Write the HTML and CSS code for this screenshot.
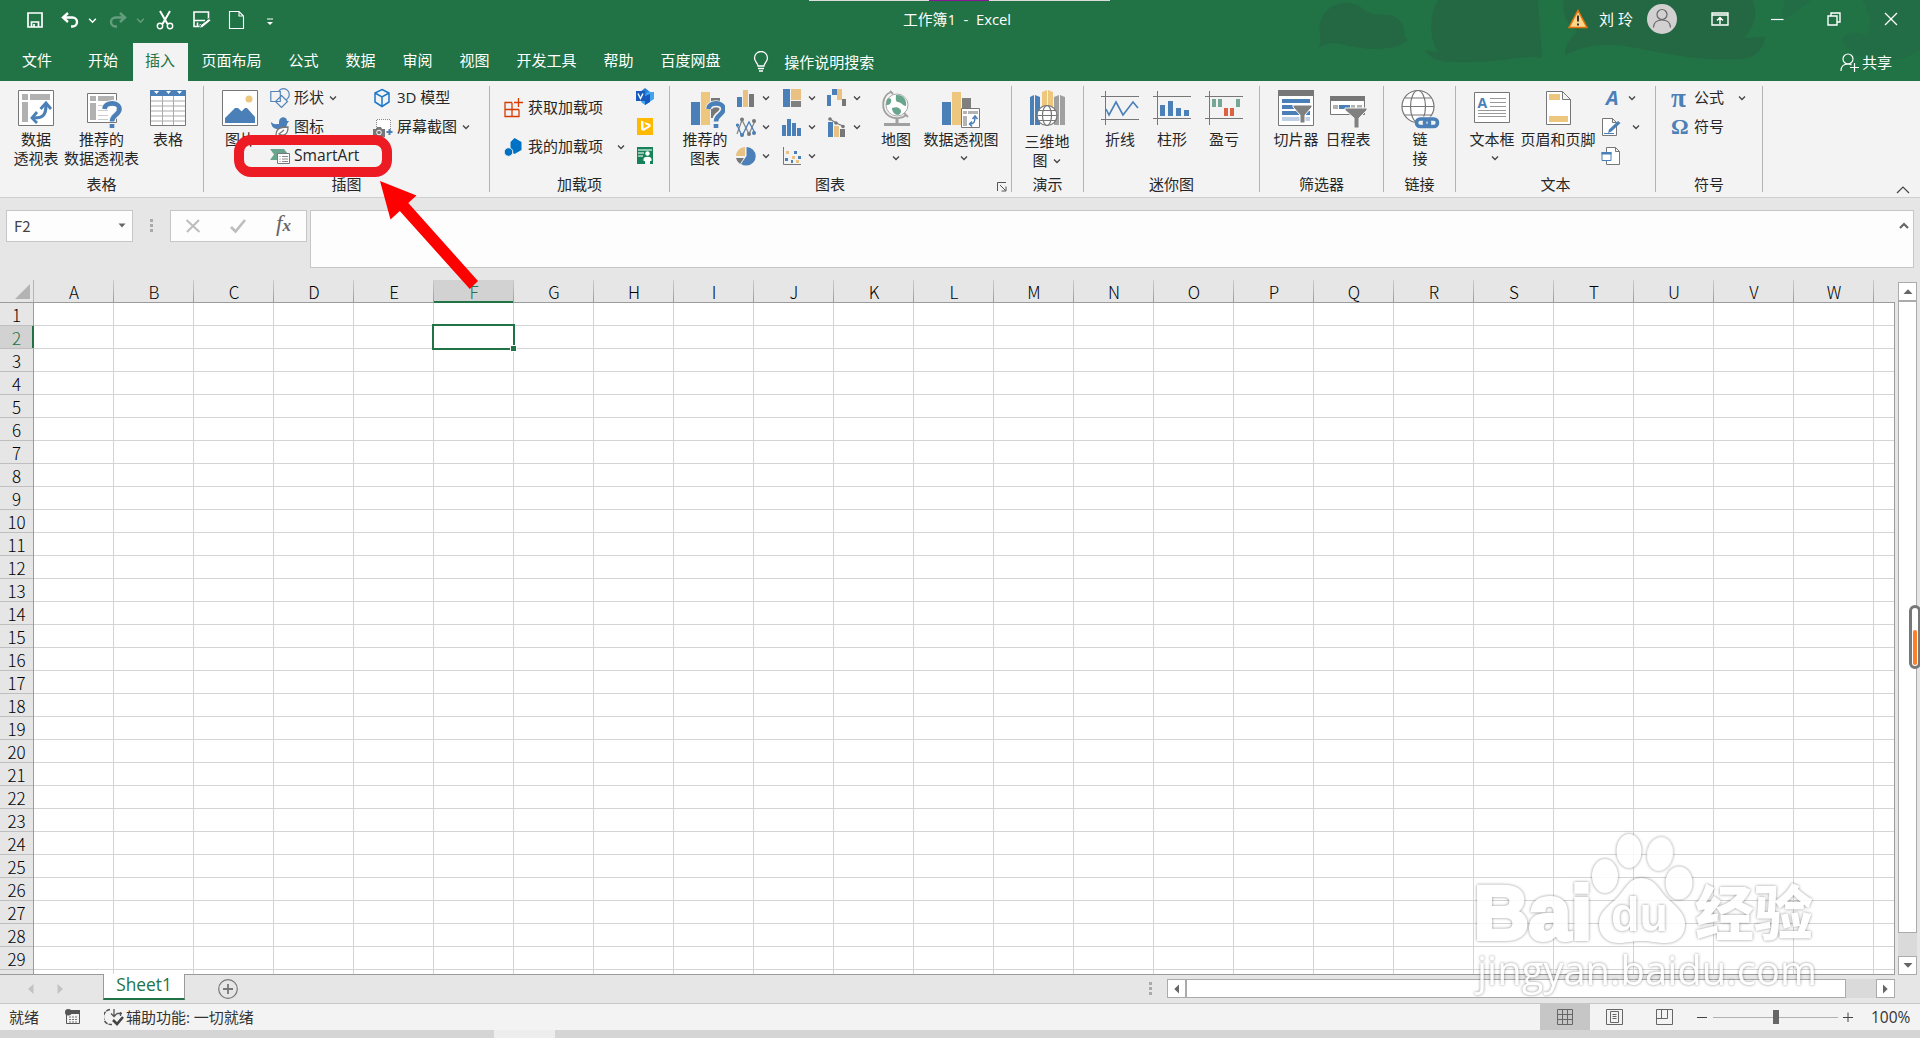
FILE: index.html
```html
<!DOCTYPE html>
<html lang="zh-CN">
<head>
    <meta charset="UTF-8">
    <meta name="viewport" content="width=device-width, initial-scale=1.0">
    <title>工作簿1 - Excel</title>
    <link rel="stylesheet" href="styles.css">
</head>
<body>
    <svg class="defs" width="0" height="0">
        <symbol id="chev" viewBox="0 0 8 8"><path d="M1 2.5l3 3 3-3" fill="none" stroke="currentColor" stroke-width="1.3"/></symbol>
    </svg>

    <header class="header">
        <svg class="header-art" width="640" height="81" viewBox="1280 0 640 81">
            <path d="M1319 48C1322 38 1318 31 1320 22C1326 2 1350-2 1362 8C1370 16 1378 14 1390 15C1402 18 1406 28 1404 36L1408 40C1395 52 1365 50 1345 45C1333 42 1326 43 1319 48z"/>
            <path d="M1432 0H1538L1542 58C1520 54 1500 64 1450 62C1438 62 1428 57 1425 50L1438 52C1428 38 1430 12 1438 0z"/>
            <path d="M1564 0H1752C1760 14 1752 30 1744 38C1754 38 1762 36 1765 37C1764 48 1756 58 1742 59C1700 62 1660 52 1630 47C1608 43 1588 44 1565 55C1564 46 1572 36 1577 32C1564 22 1562 10 1564 0z"/>
            <path opacity=".5" d="M1785 0H1812C1800 8 1788 18 1780 20zM1862 0H1920V50C1906 60 1890 62 1872 60C1856 58 1842 46 1842 38C1848 30 1860 32 1866 36C1874 24 1868 10 1862 0z"/>
        </svg>
        <div class="top-strip"><span></span></div>

        <div class="titlebar">
            <div class="qat">
                <svg class="q-save" width="18" height="18" viewBox="0 0 18 18"><path d="M2 2h14v14H2zM5.500 16v-5h7v5M8 16v-3" fill="none" stroke="#fff" stroke-width="1.700"/></svg>
                <svg class="q-undo" width="20" height="18" viewBox="0 0 20 18"><path d="M8 2L3 6.500 8 11M3 6.500h9.500a4.500 4.500 0 010 9H11" fill="none" stroke="#fff" stroke-width="2.400"/></svg>
                <svg class="q-chev" width="9" height="9"><use href="#chev"/></svg>
                <svg class="q-redo" width="20" height="18" viewBox="0 0 20 18"><path d="M12 2l5 4.500-5 4.500M17 6.500H7.500a4.500 4.500 0 000 9H9" fill="none" stroke="#fff" stroke-width="2.400"/></svg>
                <svg class="q-chev q-dim" width="9" height="9"><use href="#chev"/></svg>
                <svg class="q-cut" width="18" height="20" viewBox="0 0 18 20"><path d="M4 1l7.500 13M14 1L6.500 14" fill="none" stroke="#fff" stroke-width="2"/><circle cx="4" cy="16" r="2.700" fill="none" stroke="#fff" stroke-width="1.400"/><circle cx="14" cy="16" r="2.700" fill="none" stroke="#fff" stroke-width="1.400"/></svg>
                <svg class="q-edit" width="20" height="20" viewBox="0 0 20 20"><path d="M9 16.500H2V2h14.500v7M2 10.500h11M5.500 16v-3.500M8.500 16v-2" fill="none" stroke="#fff" stroke-width="1.600"/><path d="M7.500 18.500l1-3.500L17 8.500l2 2-8.300 6.800z" fill="#fff" stroke="#217346"/></svg>
                <svg class="q-new" width="17" height="20" viewBox="0 0 17 20"><path d="M1.500 1.500h9.500l4.500 4.500v12.500h-14zM11 1.500v4.500h4.500" fill="none" stroke="#fff" stroke-width="1.100"/></svg>
                <svg class="q-more" width="8" height="8" viewBox="0 0 8 8"><path d="M1 1h6" stroke="#fff"/><path d="M1 4h6L4 7z" fill="#fff"/></svg>
            </div>
            <div class="doc-title">工作簿1&nbsp; -&nbsp; Excel</div>
            <div class="window-tools">
                <svg width="20" height="20" viewBox="0 0 20 20"><path d="M10 1.500L19 18.500H1z" fill="#fcd68b" stroke="#e0720e" stroke-width="1.600"/><path d="M10 6.500v6M10 14.500v2" stroke="#333" stroke-width="2"/></svg>
                <span class="user">刘 玲</span>
                <svg class="avatar" width="30" height="30" viewBox="0 0 30 30"><circle cx="15" cy="15" r="15" fill="#d2d0d0"/><g fill="none" stroke="#666" stroke-width="1.200"><circle cx="15" cy="10.500" r="5"/><path d="M6.500 23.500c0-5 3.500-7.500 8.500-7.500s8.500 2.500 8.500 7.500"/></g></svg>
                <svg class="w-options" width="18" height="14" viewBox="0 0 18 14"><path d="M1 1h16v12H1zM1 3h16M9 12V6M6 8.500L9 5.500l3 3" fill="none" stroke="#fff" stroke-width="1.400"/></svg>
                <svg class="w-min" width="14" height="14" viewBox="0 0 14 14"><path d="M1 7.500h12.500" stroke="#fff" stroke-width="1.200"/></svg>
                <svg class="w-restore" width="14" height="14" viewBox="0 0 14 14"><path d="M1 4h9v9H1zM4 4V1h9v9h-3" fill="none" stroke="#fff" stroke-width="1.400"/></svg>
                <svg class="w-close" width="14" height="14" viewBox="0 0 14 14"><path d="M1 1l12 12M13 1L1 13" stroke="#fff" stroke-width="1.300"/></svg>
            </div>
        </div>

        <nav class="tabs">
            <div class="tab tab-file">文件</div>
            <div class="tab tab-home">开始</div>
            <div class="tab active">插入</div>
            <div class="tab">页面布局</div>
            <div class="tab">公式</div>
            <div class="tab">数据</div>
            <div class="tab">审阅</div>
            <div class="tab">视图</div>
            <div class="tab">开发工具</div>
            <div class="tab">帮助</div>
            <div class="tab">百度网盘</div>
            <div class="tell-me">
                <svg width="16" height="22" viewBox="0 0 16 22"><path d="M5 15c0-3-3.500-4-3.500-8a6.500 6.500 0 0113 0c0 4-3.500 5-3.500 8z" fill="none" stroke="#fff" stroke-width="1.300"/><path d="M5 17.500h6M6 20h4" stroke="#fff" stroke-width="1.500"/></svg>
                操作说明搜索
            </div>
            <div class="share">
                <svg width="19" height="19" viewBox="0 0 19 19"><g fill="none" stroke="#fff" stroke-width="1.200"><circle cx="8" cy="6" r="5"/><path d="M1 18c0-4 2-7 7-7 1.500 0 2.500.4 3.500 1M14.500 10v9M10 14.500h9"/></g></svg>
                共享
            </div>
        </nav>
    </header>

    <section class="ribbon">
        <div class="group g-tables">
            <div class="group-body">
                <div class="big">
                    <svg width="40" height="44" viewBox="0 0 40 44"><path d="M2.500 4.500h35v35h-35z" fill="#fff" stroke="#777"/><path d="M6 8h6v6H6zM14 8h20v6H14zM6 16h6v20H6z" fill="#b1b1b1"/><path d="M18 32c9 0 12-3 12-13" fill="none" stroke="#4a7fb8" stroke-width="3.200"/><path d="M24.500 23L30 17l5 6M21 26l-5 6 5 5" fill="none" stroke="#4a7fb8" stroke-width="2.800"/></svg>
                    <span>数据<br>透视表</span>
                </div>
                <div class="big">
                    <svg width="40" height="44" viewBox="0 0 40 44"><path d="M5.500 7.500h29v29h-29z" fill="#fff" stroke="#777"/><path d="M8 10h6v5H8zM16 10h16v5H16zM8 17h6v17H8z" fill="#b1b1b1"/><path d="M16 19.500h10M16 24.500h10M16 29.500h10M16 33.500h10" stroke="#ccc"/><path d="M23 23c0-7 15-8 15 0 0 6-8 5-8 12" fill="none" stroke="#f3f3f3" stroke-width="7"/><path d="M22.500 23c.5-7.500 15-7.500 15 0 0 6-7.500 5.500-7.500 12.500M30 38v4" fill="none" stroke="#4a7fb8" stroke-width="4.600"/></svg>
                    <span>推荐的<br>数据透视表</span>
                </div>
                <div class="big">
                    <svg width="40" height="44" viewBox="0 0 40 44"><path d="M2.500 4.500h35v35h-35z" fill="#fff" stroke="#777"/><path d="M2 4h36v6H2z" fill="#4a7fb8"/><path d="M3 15h34M3 20h34M3 25h34M3 30h34M3 35h34M14.500 10v29M25.500 10v29" stroke="#aaa"/><path d="M6 5h5L8.500 8zM18 5h5l-2.500 3zM29 5h5l-2.500 3z" fill="#fff"/></svg>
                    <span>表格</span>
                </div>
            </div>
            <div class="group-label">表格</div>
        </div>

        <div class="group g-illus">
            <div class="group-body">
                <div class="big">
                    <svg width="40" height="44" viewBox="0 0 40 44"><path d="M2.500 4.500h35v35h-35z" fill="#fff" stroke="#777"/><circle cx="29" cy="13" r="3.500" fill="#eec77e"/><path d="M5 37v-5l10-10 3-0 16 15zM21 26l4-4h2l8 9v6h-2z" fill="#4a7fb8"/></svg>
                    <span>图片</span>
                </div>
                <div class="stack stack-shapes">
                    <div class="small">
                        <svg width="20" height="20" viewBox="0 0 20 20"><g fill="#f3f3f3" stroke="#5585b8" stroke-width="1.200"><circle cx="13.500" cy="6.500" r="5.800"/><path d="M.8 3.500h9.500v10H.8zM11.500 7.500l6 6-6 6-6-6z"/></g></svg>
                        形状<svg class="chev" width="8" height="8"><use href="#chev"/></svg>
                    </div>
                    <div class="small">
                        <svg width="20" height="20" viewBox="0 0 20 20"><path d="M9 5c0-6 8-6 8-1h2l-2 3c0 3-3 5-5 5H7C3 12 1 8 1 5c3 3 5 2 8 2z" fill="#4a7fb8"/><path d="M6 19c0-7 3-9 12-9 0 7-4 10-9 7l5-4" fill="#fff" stroke="#777" stroke-width="1.300"/></svg>
                        图标
                    </div>
                    <div class="small smartart">
                        <svg width="20" height="20" viewBox="0 0 20 20"><path d="M0 3h14l4 5H8v6H0l4-5.500z" fill="#69a58c"/><path d="M7.500 7.500h12v10h-12z" fill="#fff" stroke="#777"/><path d="M9.500 10.500h1M12 10.500h6M9.500 13h1M12 13h6M9.500 15.500h1M12 15.500h6" stroke="#888"/></svg>
                        SmartArt
                    </div>
                </div>
                <div class="stack stack-3d">
                    <div class="small">
                        <svg width="18" height="20" viewBox="0 0 18 20"><path d="M9 1.500l7 3.500v9l-7 4.500L2 14V5zM2 5l7 4 7-4M9 9v9.500" fill="none" stroke="#1c78c8" stroke-width="1.500"/></svg>
                        3D 模型
                    </div>
                    <div class="small">
                        <svg width="20" height="20" viewBox="0 0 20 20"><path d="M3.500 12V2.500h14v12" fill="#fff" stroke="#888" stroke-dasharray="1 1"/><path d="M0 12h3l1-2h4l1 2h3v8H0z" fill="#777"/><circle cx="6" cy="15.500" r="2.300" fill="none" stroke="#fff"/><path d="M13.500 15h6M16.500 12v6" stroke="#4a7fb8" stroke-width="2"/></svg>
                        屏幕截图<svg class="chev" width="8" height="8"><use href="#chev"/></svg>
                    </div>
                </div>
            </div>
            <div class="group-label">插图</div>
        </div>

        <div class="group g-addins">
            <div class="group-body">
                <div class="stack stack-addins">
                    <div class="small">
                        <svg width="20" height="20" viewBox="0 0 20 20"><path d="M8 4.500H1v14h14v-7M1 11.500h14M8 4.500v14M14.500 0v9M10 4.500h9" fill="none" stroke="#d83b01" stroke-width="1.300"/></svg>
                        获取加载项
                    </div>
                    <div class="small">
                        <svg width="20" height="20" viewBox="0 0 20 20"><path d="M10.500 1l7 4v8l-7 4-4-2.500V5z" fill="#0072c6"/><circle cx="4.500" cy="15" r="4.300" fill="#0072c6" stroke="#f3f3f3"/></svg>
                        我的加载项<svg class="chev" width="8" height="8"><use href="#chev"/></svg>
                    </div>
                </div>
                <div class="stack stack-apps">
                    <svg width="20" height="29" viewBox="0 0 20 29"><path d="M10 5l5 4-5 6-5-6z" fill="#2b7cd3"/><path d="M12 9h7v7l-9 6-4-3z" fill="#41a5ee"/><path d="M10 13l5-2v8l-5 3z" fill="#185abd"/><path d="M1 8h9v10H1z" fill="#185abd"/><path d="M3 10.500l2.500 5 2.500-5" fill="none" stroke="#fff" stroke-width="1.400"/></svg>
                    <svg width="20" height="29" viewBox="0 0 20 29"><path d="M2 6h16v17H2z" fill="#ffb900"/><path d="M6 8.500l2.500 1v7l5-2.800-3-1.500-1-2.200 6 2.200v2.600l-7 4.200-2.500-1.500z" fill="#fff"/></svg>
                    <svg width="20" height="29" viewBox="0 0 20 29"><path d="M2 6h16v17H2z" fill="#158257"/><path d="M3 9h14M3 12h6M3 15h5" stroke="#b9dccd" stroke-width="1.500"/><circle cx="12.500" cy="12.500" r="2.200" fill="#fff"/><path d="M8.500 18c0-3 8-3 8 0v2h-1.500v3h-5v-3H8.500z" fill="#fff"/></svg>
                </div>
            </div>
            <div class="group-label">加载项</div>
        </div>

        <div class="group g-charts">
            <div class="group-body">
                <div class="big">
                    <svg width="40" height="44" viewBox="0 0 40 44"><path d="M6 16h9v23H6z" fill="#4a7fb8"/><path d="M16 6h9v33h-9z" fill="#eec77e"/><path d="M26 12h9v20h-9z" fill="#777"/><path d="M24 23c0-7 14-7 14 0 0 6-7 5-7 11v8" fill="none" stroke="#f3f3f3" stroke-width="7"/><path d="M23.500 23c.5-7.500 15-7.500 15 0 0 6-7.500 5.500-7.500 12.500M31 38v4" fill="none" stroke="#4a7fb8" stroke-width="4.600"/></svg>
                    <span>推荐的<br>图表</span>
                </div>
                <div class="chart-grid">
                    <div class="small"><svg width="20" height="20" viewBox="0 0 20 20"><path d="M1 9h5v10H1z" fill="#4a7fb8"/><path d="M7 2h5v17H7z" fill="#e9c182"/><path d="M13 6h5v13h-5z" fill="#777"/></svg><svg class="chev" width="8" height="8"><use href="#chev"/></svg></div>
                    <div class="small"><svg width="20" height="20" viewBox="0 0 20 20"><path d="M1 1h7v18H1z" fill="#4a7fb8"/><path d="M9 1h10v11H9z" fill="#e9c182"/><path d="M9 13h10v6H9z" fill="#808080"/></svg><svg class="chev" width="8" height="8"><use href="#chev"/></svg></div>
                    <div class="small"><svg width="20" height="20" viewBox="0 0 20 20"><path d="M0 7h4v11H0zM5 1h5v6H5z" fill="#4a7fb8"/><path d="M10 1h5v11h-5z" fill="#e9c182"/><path d="M15 11h4v7h-4z" fill="#777"/></svg><svg class="chev" width="8" height="8"><use href="#chev"/></svg></div>
                    <div class="small"><svg width="20" height="20" viewBox="0 0 20 20"><path d="M1 17L6 3l7 14 6-13" fill="none" stroke="#888" stroke-width="1.300"/><path d="M1 8l5 11 7-14 6 11" fill="none" stroke="#4a7fb8" stroke-width="1.300"/><g fill="#777"><circle cx="6" cy="2.500" r="2"/><circle cx="18" cy="4" r="2"/><circle cx="13" cy="17" r="2"/></g><g fill="#4a7fb8"><circle cx="1.500" cy="8" r="1.600"/><circle cx="6" cy="18" r="2"/><circle cx="18" cy="16" r="2"/></g></svg><svg class="chev" width="8" height="8"><use href="#chev"/></svg></div>
                    <div class="small"><svg width="20" height="20" viewBox="0 0 20 20"><path d="M0 8h4v11H0zM5 2h4v17H5zM10 6h4v13h-4zM15 11h4v8h-4z" fill="#4a7fb8"/></svg><svg class="chev" width="8" height="8"><use href="#chev"/></svg></div>
                    <div class="small"><svg width="20" height="20" viewBox="0 0 20 20"><path d="M1 5h5v15H1z" fill="#4a7fb8"/><path d="M7 9h5v11H7z" fill="#e9c182"/><path d="M13 12h5v8h-5z" fill="#777"/><path d="M3 2l6 4 7 3" fill="none" stroke="#777" stroke-width="1.200"/><g fill="#777"><circle cx="3" cy="2" r="1.800"/><circle cx="9" cy="6" r="1.800"/><circle cx="16" cy="9.500" r="1.800"/></g></svg><svg class="chev" width="8" height="8"><use href="#chev"/></svg></div>
                    <div class="small"><svg width="20" height="20" viewBox="0 0 20 20"><path d="M10.500 1v9L5 18a9.500 9.500 0 005.500 1.500 9.250 9.250 0 000-18.500z" fill="#4a7fb8"/><path d="M9 10V1a9 9 0 00-9 9z" fill="#e9c182"/><path d="M0 12h8l-4 6a9 9 0 01-4-6z" fill="#777"/></svg><svg class="chev" width="8" height="8"><use href="#chev"/></svg></div>
                    <div class="small"><svg width="20" height="20" viewBox="0 0 20 20"><path d="M1.500 1v17.500H19" fill="none" stroke="#777"/><path d="M4 5h3v3H4zM10 10h3v3h-3zM14 14h3v3h-3z" fill="#e9c182"/><path d="M3 12h3v3H3zM12 5h3v3h-3zM16 10h3v3h-3zM9 14h2v3H9z" fill="#4a7fb8"/></svg><svg class="chev" width="8" height="8"><use href="#chev"/></svg></div>
                </div>
                <div class="big big-map">
                    <svg width="40" height="44" viewBox="0 0 40 44"><circle cx="21" cy="19" r="11" fill="#fff" stroke="#a8a8a8"/><path d="M20 9c8-1 11 6 10 11-3 0-5-4-8-4s-2-4-2-7zM11 13c3-2 5 0 4 3s-3 3-5 3zM16 22c4-1 6-1 8 1s1 5-2 6c-3 0-6-3-6-7z" fill="#69a58c"/><path d="M15 6C6 9 4 24 13 30c6 4 14 2 17-1M14 5l3 3M28 27l4 4" fill="none" stroke="#a0a0a0" stroke-width="1.800"/><path d="M21 32v6M8 38.500h26" stroke="#a0a0a0" stroke-width="3"/></svg>
                    <span>地图</span>
                    <svg class="chev" width="8" height="8"><use href="#chev"/></svg>
                </div>
                <div class="big big-pivot">
                    <svg width="40" height="44" viewBox="0 0 40 44"><path d="M1 16h9v23H1z" fill="#4a7fb8"/><path d="M11 6h9v33h-9z" fill="#eec77e"/><path d="M21 12h9v20h-9z" fill="#808080"/><path d="M20.500 22.500h18v19h-18z" fill="#fff" stroke="#777"/><path d="M22 25h4v3h-4zM27 25h10v3H27zM22 30h4v10h-4z" fill="#b4b4b4"/><path d="M29 38c4 0 5-2 5-7M31.500 33l2.500-3 2.500 3M31 35.500L28.500 38l2.500 2.500" fill="none" stroke="#4a7fb8" stroke-width="1.500"/></svg>
                    <span>数据透视图</span>
                    <svg class="chev" width="8" height="8"><use href="#chev"/></svg>
                </div>
            </div>
            <div class="group-label">图表</div>
            <svg class="launcher" width="10" height="10" viewBox="0 0 10 10"><path d="M.5 9V.5H9M3 3l5.500 5.500M9 4.500V9H4.500" fill="none" stroke="#555"/></svg>
        </div>

        <div class="group g-tour">
            <div class="group-body">
                <div class="big">
                    <svg width="40" height="44" viewBox="0 0 40 44"><path d="M3 11l4-2v30H3zM8 9l5 2v28H8z" fill="#4a7fb8"/><path d="M15 6l5-2v18h-5zM21 4l5 2v16h-5z" fill="#eec77e"/><path d="M27 11l5-2v30h-5zM33 9l5 2v28h-5z" fill="#a0a0a0"/><g fill="none" stroke="#777" stroke-width="1.200"><circle cx="20" cy="29.500" r="10" fill="#fff"/><ellipse cx="20" cy="29.500" rx="4.500" ry="10"/><path d="M10 29.500h20M12 24.500h16M12 34.500h16"/></g></svg>
                    <span class="tour-text">三维地<br>图 <svg class="chev" width="8" height="8"><use href="#chev"/></svg></span>
                </div>
            </div>
            <div class="group-label">演示</div>
        </div>

        <div class="group g-spark">
            <div class="group-body">
                <div class="big">
                    <svg width="40" height="44" viewBox="0 0 40 44"><path d="M1 10.500h38M1 33.500h38M5.500 5v34" stroke="#777"/><path d="M6 23l3 6 7-13 7 13 10-13 5 6" fill="none" stroke="#4a7fb8" stroke-width="1.600"/></svg>
                    <span>折线</span>
                </div>
                <div class="big">
                    <svg width="40" height="44" viewBox="0 0 40 44"><path d="M1 10.500h38M1 32.500h38M5.500 5v34" stroke="#777"/><path d="M8 19h5v11H8zM16 15h5v15h-5zM24 22h5v8h-5zM32 24h5v6h-5z" fill="#4a7fb8"/></svg>
                    <span>柱形</span>
                </div>
                <div class="big">
                    <svg width="40" height="44" viewBox="0 0 40 44"><path d="M1 10.500h38M1 32.500h38M5.500 5v34" stroke="#777"/><path d="M8 13h4v8H8zM14 13h4v8h-4zM32 13h4v8h-4z" fill="#74a795"/><path d="M20 22h4v8h-4zM26 22h4v8h-4z" fill="#dc6242"/></svg>
                    <span>盈亏</span>
                </div>
            </div>
            <div class="group-label">迷你图</div>
        </div>

        <div class="group g-filter">
            <div class="group-body">
                <div class="big">
                    <svg width="40" height="44" viewBox="0 0 40 44"><path d="M2.500 4.500h35v35h-35z" fill="#fff" stroke="#777"/><path d="M2 4h36v6H2z" fill="#777"/><path d="M6 15h28M6 21h28M6 27h28" stroke="#4a7fb8" stroke-width="4"/><path d="M6 33h28" stroke="#bed0e8" stroke-width="4"/><path d="M17 19h19v2l-7 8v8h-5v-8l-7-8z" fill="#808080" stroke="#fff"/></svg>
                    <span>切片器</span>
                </div>
                <div class="big">
                    <svg width="40" height="44" viewBox="0 0 40 44"><path d="M2.500 10.500h34v18h-34z" fill="#fff" stroke="#777"/><path d="M2 10h35v5H2z" fill="#777"/><path d="M5 21h5M23 21h4M29 21h5" stroke="#b1b1b1" stroke-width="4"/><path d="M11 21h11" stroke="#4a7fb8" stroke-width="4"/><path d="M17 22h22v2l-8 8v10h-5V32l-9-8z" fill="#808080" stroke="#f3f3f3"/></svg>
                    <span>日程表</span>
                </div>
            </div>
            <div class="group-label">筛选器</div>
        </div>

        <div class="group g-link">
            <div class="group-body">
                <div class="big">
                    <svg width="40" height="44" viewBox="0 0 40 44"><g fill="none" stroke="#777" stroke-width="1.200"><circle cx="18" cy="20.500" r="16" fill="#fff"/><ellipse cx="18" cy="20.500" rx="7.500" ry="16"/><path d="M2 20.500h32M5 12h26M5 29h26"/></g><path d="M18 37h20" stroke="#f3f3f3" stroke-width="13"/><g fill="none" stroke="#4a7fb8" stroke-width="3.600"><rect x="16.500" y="33" width="13" height="7.500" rx="3.700"/><rect x="24.500" y="33" width="13" height="7.500" rx="3.700"/></g></svg>
                    <span>链<br>接</span>
                </div>
            </div>
            <div class="group-label">链接</div>
        </div>

        <div class="group g-text">
            <div class="group-body">
                <div class="big big-textbox">
                    <svg width="40" height="44" viewBox="0 0 40 44"><path d="M2.500 6.500h35v30h-35z" fill="#fff" stroke="#777"/><path d="M18 12.500h16M18 16.500h16M18 20.500h16M6 24.500h28M6 27.500h28M6 30.500h28" stroke="#999"/><text x="5.500" y="22" font-size="14" font-weight="700" fill="#4a7fb8">A</text></svg>
                    <span>文本框</span>
                    <svg class="chev" width="8" height="8"><use href="#chev"/></svg>
                </div>
                <div class="big big-hf">
                    <svg width="40" height="44" viewBox="0 0 40 44"><path d="M8.500 5.500h16l8 8v25h-24zM24.500 5.500v8h8" fill="#fff" stroke="#777"/><path d="M11 8h11v6H11zM11 30h19v6H11z" fill="#eec77e"/></svg>
                    <span>页眉和页脚</span>
                </div>
                <div class="stack stack-text">
                    <div class="small"><span class="wordart">A</span><svg class="chev" width="8" height="8"><use href="#chev"/></svg></div>
                    <div class="small sign"><svg width="20" height="20" viewBox="0 0 20 20"><path d="M1.500 1.500h10l4 4v13h-14zM11.500 1.500v4h4" fill="#fff" stroke="#777"/><path d="M3 16.500h10" stroke="#4a7fb8"/><path d="M7 16l1-3.500L17 4l2.500 2-9 8.500z" fill="#4a7fb8"/></svg><svg class="chev" width="8" height="8"><use href="#chev"/></svg></div>
                    <div class="small"><svg width="20" height="20" viewBox="0 0 20 20"><path d="M5.500 1.500h9l4 4v13h-13zM14.500 1.500v4h4" fill="#fff" stroke="#777"/><path d="M1 6.500h9v8H1z" fill="#fff" stroke="#4a7fb8"/><path d="M.5 6h10v2.500H.5z" fill="#4a7fb8"/></svg></div>
                </div>
            </div>
            <div class="group-label">文本</div>
        </div>

        <div class="group g-symbol">
            <div class="group-body">
                <div class="stack stack-symbol">
                    <div class="small"><span class="greek pi">π</span>公式<svg class="chev" width="8" height="8"><use href="#chev"/></svg></div>
                    <div class="small"><span class="greek">Ω</span>符号</div>
                </div>
            </div>
            <div class="group-label">符号</div>
        </div>
        <svg class="collapse" width="14" height="8" viewBox="0 0 14 8"><path d="M1 7l6-6 6 6" fill="none" stroke="#444" stroke-width="1.200"/></svg>
    </section>

    <section class="formula-row">
        <div class="name-box">F2<svg width="8" height="5" viewBox="0 0 8 5"><path d="M.5.5h7L4 4.500z" fill="#666"/></svg></div>
        <div class="dots"><i></i><i></i><i></i></div>
        <div class="fx-box">
            <svg width="16" height="16" viewBox="0 0 16 16"><path d="M1.500 2l13 12M14 2L2 14" stroke="#bdbdbd" stroke-width="2"/></svg>
            <svg width="18" height="16" viewBox="0 0 18 16"><path d="M2 9l4.500 4.500L16 2" fill="none" stroke="#bdbdbd" stroke-width="2.600"/></svg>
            <span class="fx"><b>f</b>x</span>
        </div>
        <div class="formula-input">
            <svg width="10" height="7" viewBox="0 0 10 7"><path d="M1 6l4-4 4 4" fill="none" stroke="#666" stroke-width="2.200"/></svg>
        </div>
    </section>

    <main class="sheet">
        <div class="sheet-main">
            <div class="col-heads" id="colHeads"><div class="corner"><svg width="15" height="15" viewBox="0 0 15 15"><path d="M15 0v15H0z" fill="#b3b3b3"/></svg></div></div>
            <div class="sheet-body">
                <div class="row-heads" id="rowHeads"></div>
                <div class="cells"><div class="selection"><i></i></div></div>
            </div>
        </div>
        <div class="vscroll">
            <div class="scroll-btn"><svg width="10" height="5" viewBox="0 0 10 5"><path d="M.5 5h9L5 .3z" fill="#666"/></svg></div>
            <div class="vthumb"></div>
            <div class="vtrack"></div>
            <div class="scroll-btn"><svg width="10" height="5" viewBox="0 0 10 5"><path d="M.5 0h9L5 4.700z" fill="#666"/></svg></div>
        </div>
    </main>

    <div class="sheet-bar">
        <div class="sheet-nav">
            <svg width="6" height="10" viewBox="0 0 6 10"><path d="M5.500 0v10L0 5z" fill="#c3c3c3"/></svg>
            <svg width="6" height="10" viewBox="0 0 6 10"><path d="M.5 0v10L6 5z" fill="#c3c3c3"/></svg>
        </div>
        <div class="sheet-tab">Sheet1</div>
        <svg class="add-sheet" width="20" height="20" viewBox="0 0 20 20"><circle cx="10" cy="10" r="9.300" fill="none" stroke="#777" stroke-width="1.200"/><path d="M5 10h10M10 5v10" stroke="#777" stroke-width="1.800"/></svg>
        <div class="dots dots-tabs"><i></i><i></i><i></i></div>
        <div class="hscroll">
            <div class="scroll-btn"><svg width="5" height="10" viewBox="0 0 5 10"><path d="M5 .5v9L.3 5z" fill="#666"/></svg></div>
            <div class="hthumb"></div>
            <div class="htrack"></div>
            <div class="scroll-btn"><svg width="5" height="10" viewBox="0 0 5 10"><path d="M0 .5v9L4.700 5z" fill="#666"/></svg></div>
        </div>
    </div>

    <footer class="status">
        <span class="ready">就绪</span>
        <svg class="macro" width="16" height="16" viewBox="0 0 16 16"><path d="M1.500 5v9.500h13V2H6" fill="none" stroke="#555"/><path d="M6 1h9v4H6z" fill="#555"/><circle cx="3.300" cy="3.300" r="3.300" fill="#555"/><path d="M4 8h9M4 10.500h9M4 13h9" stroke="#777" stroke-dasharray="2 1"/></svg>
        <svg class="a11y" width="20" height="18" viewBox="0 0 20 18"><path d="M6 1.500A7.500 7.500 0 008 16.500" fill="none" stroke="#555" stroke-width="1.500" stroke-dasharray="4 1"/><path d="M10 1v7M7 5.500l3 3 3-3M16.500 8V4M13 5.500h5" fill="none" stroke="#555" stroke-width="1.300"/><path d="M9 12l4 4 6-7" fill="none" stroke="#444" stroke-width="2.600"/></svg>
        <span class="a11y-text">辅助功能: 一切就绪</span>
        <div class="views">
            <div class="view on"><svg width="16" height="16" viewBox="0 0 16 16"><path d="M.5.5h15v15H.5zM.5 5.500h15M.5 10.500h15M5.500.5v15M10.500.5v15" fill="none" stroke="#666"/></svg></div>
            <div class="view"><svg width="17" height="16" viewBox="0 0 17 16"><path d="M.5.500h16v15H.5zM4.500 2.500h8v11h-8zM6.500 5.500h4M6.500 7.500h4M6.500 9.500h4" fill="none" stroke="#666"/></svg></div>
            <div class="view"><svg width="17" height="16" viewBox="0 0 17 16"><path d="M.5.500h16v15H.5zM5.500.500v9M11.500.500v9H.5" fill="none" stroke="#666"/></svg></div>
        </div>
        <div class="zoom">
            <svg width="10" height="10" viewBox="0 0 10 10"><path d="M0 5.500h10" stroke="#444"/></svg>
            <div class="slider"><i></i></div>
            <svg width="10" height="10" viewBox="0 0 10 10"><path d="M0 5.500h10M5 .5v10" stroke="#444"/></svg>
            <span>100%</span>
        </div>
    </footer>
    <div class="taskbar"><i></i></div>

    <!-- annotations -->
    <div class="mark-box"></div>
    <svg class="mark-arrow" width="110" height="116" viewBox="375 178 110 116"><path d="M380 181l36.500 14.500-8.200 7.500L478 281l-8.200 8-70-78-9.300 8.500z" fill="#f00"/></svg>
    <div class="float-meter"><i></i></div>
    <svg class="watermark" width="360" height="180" viewBox="1465 825 360 180">
        <text class="wm-b" x="1474" y="939" textLength="118" lengthAdjust="spacingAndGlyphs">Bai</text>
        <ellipse cx="1605" cy="876" rx="13" ry="17"/>
        <ellipse cx="1629" cy="851" rx="12.500" ry="17"/>
        <ellipse cx="1660" cy="854" rx="13" ry="17" transform="rotate(10 1660 854)"/>
        <ellipse cx="1679" cy="883" rx="13.500" ry="16.500"/>
        <path d="M1641 878c14 0 18 12 26 20 10 9 18 16 18 26 0 14-10 19-20 19-9 0-14-2-23-2-10 0-15 2-24 2-12 0-19-9-19-19 0-11 8-17 17-25s12-21 25-21z"/>
        <text class="wm-d" x="1611" y="931" textLength="57" lengthAdjust="spacingAndGlyphs">du</text>
        <text class="wm-c" x="1695" y="935">经验</text>
        <text class="wm-u" x="1477" y="985" textLength="340" lengthAdjust="spacingAndGlyphs">jingyan.baidu.com</text>
    </svg>

    <script>
        const colHeads = document.getElementById('colHeads');
        for (const letter of 'ABCDEFGHIJKLMNOPQRSTUVW') {
            const cell = document.createElement('div');
            cell.className = letter === 'F' ? 'col selected' : 'col';
            cell.textContent = letter;
            colHeads.appendChild(cell);
        }

        const rowHeads = document.getElementById('rowHeads');
        for (let i = 1; i <= 29; i++) {
            const cell = document.createElement('div');
            cell.className = i === 2 ? 'row selected' : 'row';
            cell.textContent = i;
            rowHeads.appendChild(cell);
        }
    </script>
</body>
</html>
```
FILE: styles.css
```css
* {
    box-sizing: border-box;
}

body {
    margin: 0;
    width: 1920px;
    height: 1038px;
    overflow: hidden;
    position: relative;
    background: #e6e6e6;
    color: #262626;
    font-family: "Open Sans", "Noto Sans CJK SC", sans-serif;
    font-size: 15px;
}

svg {
    display: block;
    flex: none;
}

.defs {
    position: absolute;
}

.chev {
    color: #444;
}

/* title bar and tabs */
.header {
    position: relative;
    height: 81px;
    background: #217346;
    color: #fff;
}

.header-art {
    position: absolute;
    right: 0;
    top: 0;
    fill: #246843;
}

.top-strip {
    position: absolute;
    left: 809px;
    top: 0;
    width: 301px;
    height: 1px;
    padding-left: 120px;
    background: #dcdcdc;
}

.top-strip span {
    display: block;
    width: 60px;
    height: 1px;
    background: #881798;
}

.titlebar {
    position: relative;
    display: flex;
    height: 43px;
    justify-content: space-between;
}

.qat {
    display: flex;
    align-items: center;
    height: 40px;
    padding-left: 26px;
    width: 903px;
}

.qat svg {
    color: #fff;
}

.q-undo { margin-left: 16px; }
.q-chev { margin-left: 8px; }
.q-redo { margin-left: 11px; opacity: .3; }
.q-dim { opacity: .3; margin-left: 8px; }
.q-cut { margin-left: 11px; }
.q-edit { margin-left: 18px; }
.q-new { margin-left: 16px; }
.q-more { margin: 4px 0 0 21px; }

.doc-title {
    font-size: 14.8px;
    line-height: 38px;
    white-space: nowrap;
}

.window-tools {
    display: flex;
    align-items: center;
    height: 38px;
    margin-left: auto;
    padding-right: 22px;
}

.user {
    width: 36px;
    margin: -1px 12px 0 11px;
    white-space: nowrap;
}

.w-options { margin-left: 34px; }
.w-min { margin-left: 41px; }
.w-restore { margin-left: 43px; }
.w-close { margin-left: 43px; }

.tabs {
    position: relative;
    display: flex;
    height: 38px;
    line-height: 35px;
}

.tab {
    padding: 0 13.5px;
}

.tab-file {
    width: 74px;
    padding-left: 22px;
}

.tab-home {
    width: 59px;
    padding-left: 14px;
}

.tab.active {
    width: 55px;
    padding: 0 0 0 12px;
    background: #f3f3f3;
    color: #217346;
}

.tell-me {
    display: flex;
    align-items: center;
    gap: 15px;
    margin-left: 19px;
}

.share {
    display: flex;
    align-items: center;
    gap: 3px;
    margin: 0 28px 0 auto;
}

/* ribbon */
.ribbon {
    position: relative;
    display: flex;
    height: 117px;
    background: #f3f3f3;
    border-bottom: 1px solid #cfcfcf;
    line-height: 19px;
}

.group {
    position: relative;
    height: 106px;
    margin-top: 5px;
    border-right: 1px solid #b4b4b4;
}

.g-tables { width: 204px; }
.g-illus { width: 286px; }
.g-addins { width: 180px; }
.g-charts { width: 342px; }
.g-tour { width: 72px; }
.g-spark { width: 176px; }
.g-filter { width: 124px; }
.g-link { width: 72px; }
.g-text { width: 200px; }
.g-symbol { width: 107px; }

.group-body {
    display: flex;
    height: 88px;
}

.group-label {
    height: 20px;
    line-height: 20px;
    text-align: center;
}

.big {
    display: flex;
    flex-direction: column;
    align-items: center;
    flex: none;
    width: 52px;
    text-align: center;
    white-space: nowrap;
}

.big > .chev {
    margin-top: 5px;
}

.stack {
    display: flex;
    flex-direction: column;
    margin-top: -3px;
}

.small {
    display: flex;
    align-items: center;
    height: 29px;
    gap: 4px;
    white-space: nowrap;
}

.g-tables .group-body { padding-left: 10px; }
.g-tables .big:nth-child(2) { width: 79px; }
.g-tables .big:nth-child(3) { width: 54px; }

.g-illus .group-body { padding-left: 10px; }
.stack-shapes { width: 96px; margin-left: 4px; }
.stack-shapes .chev { margin-left: 1px; }
.smartart { font-size: 15.6px; }
.stack-3d { margin-left: 7px; }
.stack-3d .small:first-child { gap: 6px; }
.stack-3d .chev { margin-left: 1px; }

.stack-addins {
    width: 131px;
    margin: 2px 0 0 14px;
}

.stack-addins .small { height: 39px; }
.stack-addins .chev { margin-left: 10px; }

.g-charts .group-body { padding-left: 9px; }

.chart-grid {
    display: grid;
    grid-template-columns: 46px 45px 45px;
    grid-template-rows: repeat(3, 29px);
    margin: -3px 0 0 5px;
}

.chart-grid .small { gap: 6px; }
.big-map { margin-left: -2px; }
.big-pivot { width: 78px; }
.big-pivot .chev { margin-left: 6px; }
.g-charts .group-label { width: 320px; }

.launcher {
    position: absolute;
    right: 4px;
    bottom: 0;
}

.g-tour .big { margin-left: 9px; }

.tour-text {
    margin-top: 2px;
}

.tour-text .chev {
    display: inline-block;
    vertical-align: 1px;
    margin-left: 2px;
}

.g-spark .group-body { padding-left: 10px; }
.g-filter .group-body { padding-left: 10px; }
.g-link .big { margin-left: 10px; }

.g-text .group-body { padding-left: 10px; }
.big-textbox .chev { margin-left: 6px; }
.big-hf { width: 80px; }
.stack-text { margin-left: 3px; }
.stack-text .small { gap: 7px; }
.stack-text .sign { gap: 11px; }

.wordart {
    width: 20px;
    padding-left: 5px;
    color: #4a7fb8;
    font-size: 20px;
    font-weight: 700;
    font-style: italic;
    line-height: 28px;
}

.stack-symbol { margin-left: 15px; }
.stack-symbol .chev { margin-left: 10px; }

.greek {
    width: 19px;
    font: 700 22px/20px "Liberation Serif", serif;
    color: #4a7fb8;
}

.greek.pi {
    font-size: 27px;
}

.collapse {
    margin: 105px 10px 0 auto;
}

/* formula bar */
.formula-row {
    display: flex;
    height: 82px;
    padding: 12px 6px 0;
}

.name-box,
.fx-box,
.formula-input {
    display: flex;
    background: #fdfdfd;
    border: 1px solid #c6c6c6;
}

.name-box {
    align-items: center;
    justify-content: space-between;
    width: 127px;
    height: 32px;
    padding: 0 6px 2px 7px;
    color: #444;
    font-family: "Noto Sans CJK SC", sans-serif;
}

.dots {
    display: flex;
    flex-direction: column;
    gap: 2px;
    margin: 9px 0 0 17px;
}

.dots i {
    width: 3px;
    height: 3px;
    background: #aaa;
}

.fx-box {
    align-items: center;
    width: 137px;
    height: 32px;
    margin-left: 17px;
    padding-left: 14px;
    gap: 28px;
}

.fx {
    font: italic 700 17px/22px "Liberation Serif", serif;
    color: #666;
    margin: -3px 0 0 1px;
}

.fx b {
    font-weight: 400;
    font-size: 23px;
}

.formula-input {
    flex: 1;
    height: 58px;
    margin-left: 3px;
    padding: 11px 4px;
    justify-content: flex-end;
}

/* grid */
.sheet {
    display: flex;
    height: 695px;
}

.sheet-main {
    width: 1895px;
    border-bottom: 1px solid #9b9b9b;
}

.col-heads,
.row-heads {
    font-family: "Noto Sans CJK SC", sans-serif;
    font-size: 17px;
    font-weight: 300;
    color: #000;
    text-align: center;
}

.col-heads {
    display: flex;
    height: 23px;
    border-bottom: 1px solid #9b9b9b;
}

.corner {
    width: 34px;
    padding: 4px 0 0 15px;
    border-right: 1px solid #b4b4b4;
}

.col {
    width: 80px;
    height: 22px;
    line-height: 23px;
    padding-left: 1px;
    border-right: 1px solid;
    border-image: linear-gradient(#cfcfcf, #999) 1;
}

.col.selected {
    height: 23px;
    background: #d2d2d2;
    color: #217346;
    box-shadow: inset 0 -2px #217346;
}

.sheet-body {
    display: flex;
    height: 671px;
    overflow: hidden;
}

.row-heads {
    width: 34px;
    border-right: 1px solid #9b9b9b;
}

.row {
    height: 23px;
    line-height: 24px;
    border-bottom: 1px solid #bfbfbf;
}

.row.selected {
    width: 34px;
    padding-right: 1px;
    background: #d2d2d2;
    color: #217346;
    box-shadow: inset -2px 0 #217346;
}

.cells {
    position: relative;
    flex: 1;
    border-right: 1px solid #9b9b9b;
    background:
        repeating-linear-gradient(to right, transparent 0 79px, #d4d4d4 79px 80px),
        repeating-linear-gradient(to bottom, #fff 0 22px, #d4d4d4 22px 23px);
}

.selection {
    position: absolute;
    left: 398px;
    top: 21px;
    width: 83px;
    height: 26px;
    border: 2px solid #217346;
}

.selection i {
    position: absolute;
    right: -4px;
    bottom: -4px;
    width: 7px;
    height: 7px;
    background: #217346;
    border: 1px solid #fff;
}

.vscroll {
    display: flex;
    flex-direction: column;
    width: 19px;
    margin: 2px 0 0 3px;
}

.scroll-btn {
    display: flex;
    align-items: center;
    justify-content: center;
    flex: none;
    width: 19px;
    height: 19px;
    background: #fff;
    border: 1px solid #ababab;
}

.vthumb {
    height: 632px;
    background: #fff;
    border: 1px solid #ababab;
}

.vtrack {
    flex: 1;
    background: #dadada;
}

/* sheet tabs */
.sheet-bar {
    display: flex;
    height: 29px;
    border-bottom: 1px solid #c6c6c6;
}

.sheet-nav {
    display: flex;
    gap: 23px;
    width: 103px;
    padding: 9px 0 0 28px;
}

.sheet-tab {
    position: relative;
    width: 82px;
    height: 26px;
    margin-top: -1px;
    background: #fff;
    border: 1px solid #9b9b9b;
    border-width: 0 1px;
    border-bottom: 2px solid #217346;
    color: #217346;
    font-size: 17.3px;
    line-height: 21px;
    text-align: center;
}

.add-sheet {
    margin: 4px 0 0 33px;
}

.dots-tabs {
    margin: 7px 0 0 911px;
}

.hscroll {
    display: flex;
    width: 728px;
    margin: 4px 0 0 15px;
}

.hthumb {
    width: 660px;
    height: 19px;
    background: #fff;
    border: 1px solid #ababab;
}

.htrack {
    flex: 1;
    height: 19px;
    background: #dadada;
}

/* status bar */
.status {
    display: flex;
    align-items: center;
    height: 26px;
    background: #f3f3f3;
    color: #333;
}

.ready,
.a11y-text {
    margin-top: -2px;
}

.ready { margin-left: 9px; }
.macro { margin-left: 26px; }
.a11y { margin-left: 23px; }
.a11y-text { margin-left: 2px; }

.views {
    display: flex;
    height: 26px;
    margin-left: auto;
}

.view {
    display: flex;
    align-items: center;
    justify-content: center;
    width: 50px;
    padding-right: 1px;
}

.view.on {
    padding: 0;
    background: #c6c6c6;
}

.zoom {
    display: flex;
    align-items: center;
    width: 230px;
    padding-left: 7px;
}

.slider {
    width: 125px;
    height: 1px;
    margin: 0 5px 0 6px;
    background: #b1b1b1;
}

.slider i {
    display: block;
    width: 6px;
    height: 14px;
    margin: -7px 0 0 60px;
    background: #666;
}

.zoom span {
    margin-left: 18px;
    font-size: 15.5px;
}

.taskbar {
    height: 8px;
    background: #d5d5d5;
}

.taskbar i {
    display: block;
    width: 61px;
    height: 8px;
    margin-left: 494px;
    background: #ededed;
}

/* annotations over the window */
.mark-box {
    position: absolute;
    left: 234px;
    top: 135px;
    width: 158px;
    height: 42px;
    border: 10px solid #ed1c24;
    border-radius: 17px;
}

.mark-arrow {
    position: absolute;
    left: 375px;
    top: 178px;
}

.float-meter {
    position: absolute;
    left: 1909px;
    top: 605px;
    width: 12px;
    height: 64px;
    padding-top: 22px;
    border: 3px solid #777;
    border-radius: 6px;
    background: #fff;
}

.float-meter i {
    display: block;
    width: 4px;
    height: 35px;
    margin-left: 1px;
    border-radius: 2px;
    background: #ff7f27;
}

.watermark {
    position: absolute;
    left: 1465px;
    top: 825px;
    fill: #fff;
    opacity: .85;
}

.watermark text,
.watermark path,
.watermark ellipse {
    filter: drop-shadow(0 0 1.5px rgba(0, 0, 0, .5));
}

.wm-b {
    font: 700 76px "Liberation Sans", sans-serif;
    stroke: #fff;
    stroke-width: 4px;
}

.wm-d {
    font: 700 48px "Liberation Sans", sans-serif;
}

.wm-c {
    font: 900 59px "Noto Sans CJK SC", sans-serif;
}

.wm-u {
    font: 400 41px "Open Sans", sans-serif;
}
```
